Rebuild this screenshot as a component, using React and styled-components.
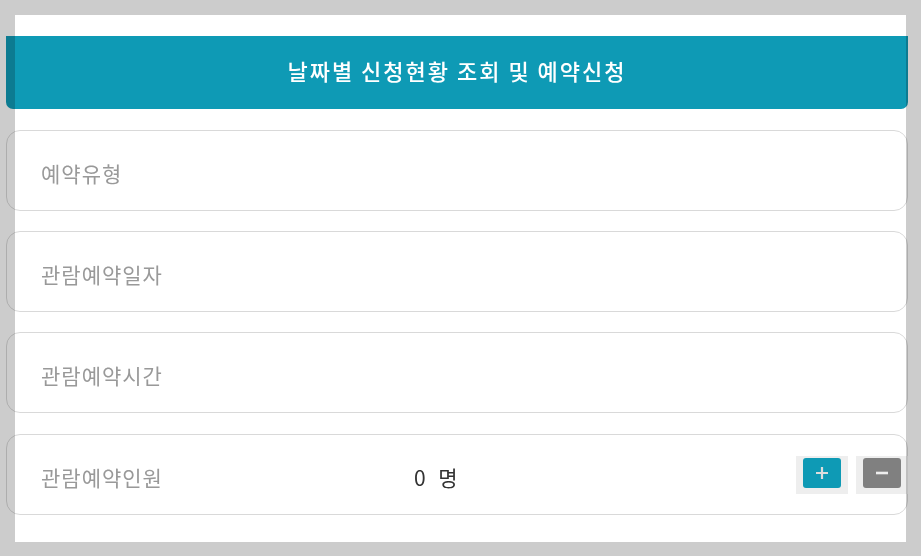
import styled, { createGlobalStyle } from 'styled-components';

const GlobalStyle = createGlobalStyle`
  html, body {
    margin: 0;
    padding: 0;
    background: #cccccc;
  }
  body {
    font-family: "Noto Sans CJK KR", "Noto Sans", sans-serif;
  }
`;

const Panel = styled.main`
  width: 891px;
  margin: 15px 0 0 15px;
  padding: 21px 0 27px;
  background: #ffffff;
  box-sizing: border-box;
`;

const Header = styled.h1`
  margin: 0 -2px 0 -9px;
  height: 73px;
  box-sizing: border-box;
  padding-bottom: 5px;
  display: flex;
  align-items: center;
  justify-content: center;
  background: #0e9ab5;
  border-radius: 0 0 7px 7px;
  mix-blend-mode: multiply;
  color: #ffffff;
  font-size: 22px;
  font-weight: 500;
  letter-spacing: 2px;
`;

const List = styled.div`
  display: flex;
  flex-direction: column;
  gap: 20px;
  margin: 21px -2px 0 -9px;
`;

const Row = styled.div`
  height: 81px;
  box-sizing: border-box;
  display: flex;
  align-items: center;
  padding: 4px 0 0 34px;
  margin-top: ${(props) => (props.$last ? '1px' : '0')};
  border: 1px solid #d9d9d9;
  border-radius: 14px;
  mix-blend-mode: multiply;
`;

const Label = styled.span`
  width: 373px;
  flex-shrink: 0;
  color: #999999;
  font-size: 21px;
  letter-spacing: 1px;
`;

const Count = styled.span`
  flex: 1;
  color: #333333;
  font-size: 21px;
  word-spacing: 8px;
`;

const Steppers = styled.div`
  display: flex;
  gap: 8px;
  margin: -4px -1px 0 0;
`;

const StepBox = styled.div`
  width: 52px;
  height: 38px;
  box-sizing: border-box;
  padding: 2px 7px 6px;
  background: #eeeeee;
`;

const StepButton = styled.button`
  width: 38px;
  height: 30px;
  border: none;
  border-radius: 3px;
  padding: 0;
  display: flex;
  align-items: center;
  justify-content: center;
  background: ${(props) => (props.$minus ? '#808080' : '#0e9ab5')};
  cursor: pointer;
`;

const fields = ['예약유형', '관람예약일자', '관람예약시간'];

export default function App() {
  return (
    <>
      <GlobalStyle />
      <Panel>
        <Header>날짜별 신청현황 조회 및 예약신청</Header>
        <List>
          {fields.map((label) => (
            <Row key={label}>
              <Label>{label}</Label>
            </Row>
          ))}
          <Row $last>
            <Label>관람예약인원</Label>
            <Count>0 명</Count>
            <Steppers>
              <StepBox>
                <StepButton aria-label="plus">
                  <svg width="14" height="14" viewBox="0 0 14 14">
                    <path d="M7 1v12M1 7h12" stroke="#dddddd" strokeWidth="2.2" fill="none" />
                  </svg>
                </StepButton>
              </StepBox>
              <StepBox>
                <StepButton $minus aria-label="minus">
                  <svg width="14" height="14" viewBox="0 0 14 14">
                    <path d="M1 7h12" stroke="#eeeeee" strokeWidth="2.6" fill="none" />
                  </svg>
                </StepButton>
              </StepBox>
            </Steppers>
          </Row>
        </List>
      </Panel>
    </>
  );
}
